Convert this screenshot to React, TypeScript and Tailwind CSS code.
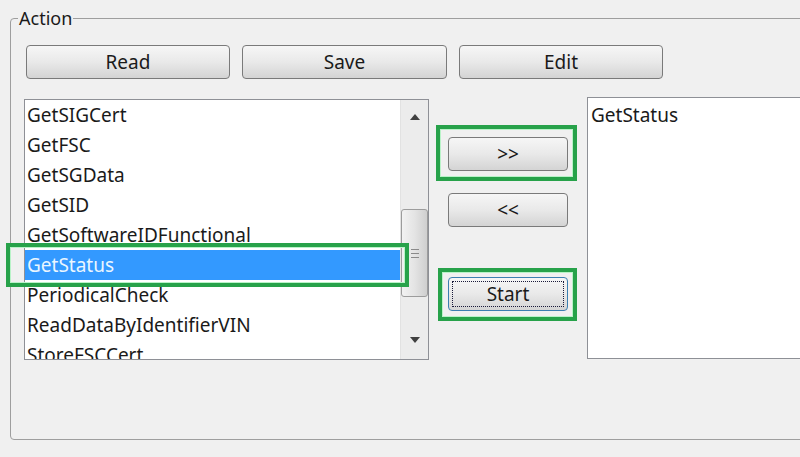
import React from "react";

const items = [
  "GetSIGCert",
  "GetFSC",
  "GetSGData",
  "GetSID",
  "GetSoftwareIDFunctional",
  "GetStatus",
  "PeriodicalCheck",
  "ReadDataByIdentifierVIN",
  "StoreFSCCert",
];

const font = { fontFamily: '"Noto Sans", "DejaVu Sans", sans-serif' };

function WinButton({
  label,
  className = "",
  focused = false,
}: {
  label: string;
  className?: string;
  focused?: boolean;
}) {
  return (
    <button
      className={
        "flex h-[34px] items-center justify-center rounded-[4px] border bg-linear-to-b from-[#f6f6f6] via-[#e9e9e9] to-[#d4d4d4] text-[19px] leading-none text-[#1a1a1a] " +
        (focused ? "border-[#3c7fb1] p-[3px] " : "border-[#7a7a7a] ") +
        className
      }
    >
      {focused ? (
        <span className="flex h-full w-full items-center justify-center border border-dotted border-[#1a1a3a]">
          {label}
        </span>
      ) : (
        label
      )}
    </button>
  );
}

function Highlight({ className }: { className: string }) {
  return (
    <div
      className={
        "pointer-events-none absolute border-[4px] border-[#27a24a] shadow-[inset_0_0_0_1px_#b9f3c8] " +
        className
      }
    />
  );
}

function ScrollBar() {
  return (
    <div className="flex w-[28px] flex-col items-center border-l border-[#e2e2e2] bg-[#ececec]">
      <div className="flex h-[30px] w-full items-center justify-center pt-[4px]">
        <svg width="10" height="6" viewBox="0 0 10 6">
          <path d="M0 6 L5 0 L10 6 Z" fill="#404040" />
        </svg>
      </div>
      <div className="mt-[79px] flex h-[88px] w-[27px] items-center justify-center rounded-[3px] border border-[#9c9c9c] bg-linear-to-r from-[#f2f2f2] via-[#e4e4e4] to-[#cfcfcf]">
        <div className="flex flex-col gap-[3px]">
          <div className="h-px w-[8px] bg-[#8a8a8a]" />
          <div className="h-px w-[8px] bg-[#8a8a8a]" />
          <div className="h-px w-[8px] bg-[#8a8a8a]" />
        </div>
      </div>
      <div className="mt-auto flex h-[30px] w-full items-center justify-center pb-[8px]">
        <svg width="10" height="6" viewBox="0 0 10 6">
          <path d="M0 0 L10 0 L5 6 Z" fill="#404040" />
        </svg>
      </div>
    </div>
  );
}

export default function App() {
  return (
    <div
      className="h-[457px] w-[800px] overflow-hidden bg-[#f0f0f0] text-[#1a1a1a]"
      style={font}
    >
      <fieldset className="ml-[10px] mt-[7px] h-[433px] w-[830px] rounded-[4px] border border-[#9e9e9e] pl-[13px] pt-[16px]">
        <legend className="-ml-[6px] px-[1px] text-[18px] leading-[22px]">
          Action
        </legend>

        <div className="ml-[2px] flex gap-[12px]">
          <WinButton label="Read" className="w-[204px]" />
          <WinButton label="Save" className="w-[205px]" />
          <WinButton label="Edit" className="w-[204px]" />
        </div>

        <div className="mt-[20px] flex items-start">
          {/* left list */}
          <div className="relative flex h-[261px] w-[405px] border border-[#8e9096] bg-white">
            <div className="flex-1 overflow-hidden">
              {items.map((it) => (
                <div
                  key={it}
                  className={
                    "flex h-[30px] items-center whitespace-nowrap pl-[2px] text-[19px] leading-none " +
                    (it === "GetStatus" ? "bg-[#3399ff] text-[#eaf6ff]" : "")
                  }
                >
                  {it}
                </div>
              ))}
            </div>
            <ScrollBar />
            <Highlight className="left-[-19px] top-[143px] h-[44px] w-[403px]" />
          </div>

          {/* middle buttons */}
          <div className="flex flex-col pl-[19px] pr-[19px] pt-[38px]">
            <div className="relative">
              <WinButton label=">>" className="w-[120px]" />
              <Highlight className="left-[-12px] top-[-12px] h-[56px] w-[141px]" />
            </div>
            <WinButton label="<<" className="mt-[22px] w-[120px]" />
            <div className="relative mt-[50px]">
              <WinButton label="Start" focused className="w-[120px]" />
              <Highlight className="left-[-10px] top-[-9px] h-[53px] w-[139px]" />
            </div>
          </div>

          {/* right list */}
          <div className="-mt-[2px] h-[262px] w-[240px] border border-[#8e9096] bg-white">
            <div className="flex h-[34px] items-center pl-[3px] text-[19px] leading-none">
              GetStatus
            </div>
          </div>
        </div>
      </fieldset>
    </div>
  );
}
